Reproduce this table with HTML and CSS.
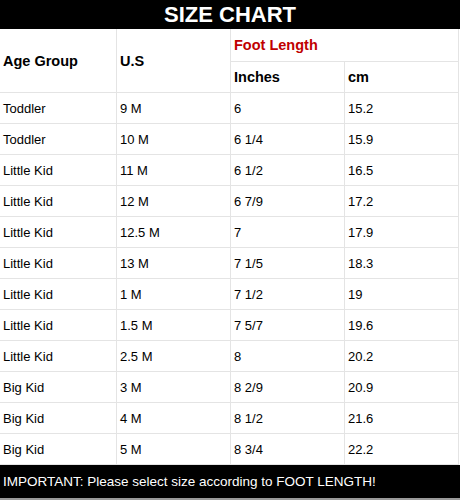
FILE: index.html
```html
<!DOCTYPE html>
<html>
<head>
<meta charset="utf-8">
<link rel="stylesheet" href="styles.css">
</head>
<body>
<div class="chart">
  <div class="title">SIZE CHART</div>
  <div class="grid">
    <div class="cell head span-rows">Age Group</div>
    <div class="cell head span-rows">U.S</div>
    <div class="cell head red span-cols">Foot Length</div>
    <div class="cell head">Inches</div>
    <div class="cell head">cm</div>

    <div class="cell">Toddler</div><div class="cell">9 M</div><div class="cell">6</div><div class="cell">15.2</div>
    <div class="cell">Toddler</div><div class="cell">10 M</div><div class="cell">6 1/4</div><div class="cell">15.9</div>
    <div class="cell">Little Kid</div><div class="cell">11 M</div><div class="cell">6 1/2</div><div class="cell">16.5</div>
    <div class="cell">Little Kid</div><div class="cell">12 M</div><div class="cell">6 7/9</div><div class="cell">17.2</div>
    <div class="cell">Little Kid</div><div class="cell">12.5 M</div><div class="cell">7</div><div class="cell">17.9</div>
    <div class="cell">Little Kid</div><div class="cell">13 M</div><div class="cell">7 1/5</div><div class="cell">18.3</div>
    <div class="cell">Little Kid</div><div class="cell">1 M</div><div class="cell">7 1/2</div><div class="cell">19</div>
    <div class="cell">Little Kid</div><div class="cell">1.5 M</div><div class="cell">7 5/7</div><div class="cell">19.6</div>
    <div class="cell">Little Kid</div><div class="cell">2.5 M</div><div class="cell">8</div><div class="cell">20.2</div>
    <div class="cell">Big Kid</div><div class="cell">3 M</div><div class="cell">8 2/9</div><div class="cell">20.9</div>
    <div class="cell">Big Kid</div><div class="cell">4 M</div><div class="cell">8 1/2</div><div class="cell">21.6</div>
    <div class="cell">Big Kid</div><div class="cell">5 M</div><div class="cell">8 3/4</div><div class="cell">22.2</div>
  </div>
  <div class="note">IMPORTANT: Please select size according to FOOT LENGTH!</div>
</div>
</body>
</html>
```
FILE: styles.css
```css
html, body {
  margin: 0;
  padding: 0;
  background: #fff;
}
.chart {
  width: 460px;
  height: 500px;
  display: flex;
  flex-direction: column;
  font-family: "Liberation Sans", Arial, sans-serif;
  color: #000;
}
.title {
  height: 29px;
  background: #000;
  color: #fff;
  font-weight: bold;
  font-size: 22px;
  line-height: 30px;
  text-align: center;
}
.grid {
  width: 458px;
  display: grid;
  grid-template-columns: 116px 113px 113px 113px;
  grid-template-rows: 32px 30px repeat(12, 30px);
  gap: 1px;
  background: #e4e4e4;
  padding: 0 1px 1px 0;
}
.cell {
  background: #fff;
  display: flex;
  align-items: center;
  padding-left: 3px;
  font-size: 13px;
}
.head {
  font-weight: bold;
  font-size: 14.5px;
}
.red {
  color: #c00000;
}
.span-rows {
  grid-row: span 2;
}
.span-cols {
  grid-column: span 2;
}
.note {
  height: 33px;
  background: #000;
  color: #fff;
  font-size: 13.5px;
  display: flex;
  align-items: center;
  padding-left: 3px;
  border-bottom: 2px solid #9a9a9a;
}
```
